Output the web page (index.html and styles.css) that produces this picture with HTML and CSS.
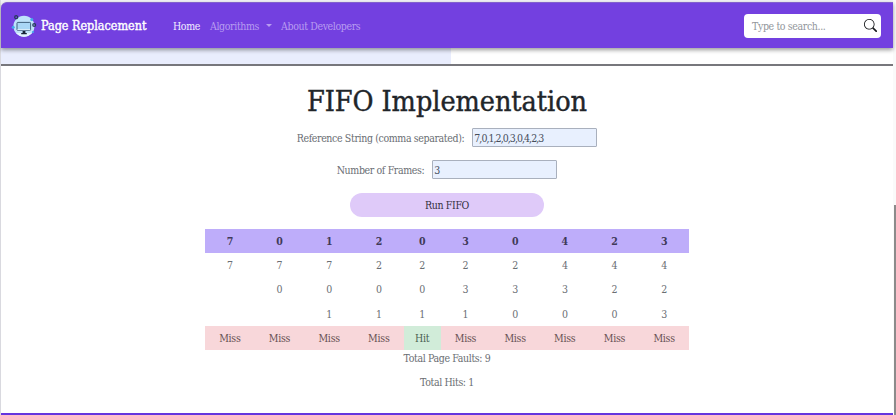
FILE: index.html
```
<!DOCTYPE html>
<html lang="en">
<head>
<meta charset="utf-8">
<title>Page Replacement</title>
<link rel="stylesheet" href="styles.css">
</head>
<body>
<div class="page">
  <nav class="navbar">
    <svg class="logo" width="26" height="26" viewBox="0 0 26 26">
      <circle cx="13" cy="13.3" r="10.6" fill="#bfe2fb"/>
      <path d="M5 20a10.6 10.6 0 0 0 16 0z" fill="#e2f4ff"/>
      <g fill="none" stroke="#263b5c" stroke-width="1.3">
        <circle cx="5.2" cy="4.2" r="1.5"/><circle cx="23.2" cy="12" r="1.4"/>
      </g>
      <g fill="#43a9ed"><circle cx="20.8" cy="6.6" r="1.5"/><circle cx="2.2" cy="14.2" r="1.5"/><circle cx="22" cy="19" r="1.1"/></g>
      <rect x="6" y="9.4" width="13.6" height="8" rx=".8" fill="#a9d6f6" stroke="#31516f" stroke-width=".9"/>
      <path d="M6.5 16.7h12.6" stroke="#e5f3fc"/>
      <path d="M11.6 18h2.8v2h1.4v1.2h-5.6V20h1.4z" fill="#172538"/>
    </svg>
    <span class="brand">Page Replacement</span>
    <a class="link active">Home</a>
    <a class="link algorithms">Algorithms</a><span class="caret"></span>
    <a class="link about">About Developers</a>
    <div class="search">
      <span class="hint">Type to search...</span>
      <svg width="13" height="13" viewBox="0 0 16 16" fill="#16181b"><path d="M11.742 10.344a6.5 6.5 0 1 0-1.397 1.398h-.001c.03.04.062.078.098.115l3.85 3.85a1 1 0 0 0 1.415-1.414l-3.85-3.85a1.007 1.007 0 0 0-.115-.1zM12 6.5a5.5 5.5 0 1 1-11 0 5.5 5.5 0 0 1 11 0z"/></svg>
    </div>
  </nav>
  <div class="strip"><div class="strip-fill"></div></div>
  <main>
    <h1>FIFO Implementation</h1>
    <div class="field first"><label class="ref-label">Reference String (comma separated):</label><div class="input ref-value">7,0,1,2,0,3,0,4,2,3</div></div>
    <div class="field second"><label class="frames-label">Number of Frames:</label><div class="input">3</div></div>
    <div class="run"><span>Run FIFO</span></div>
    <table>
      <colgroup><col><col><col><col><col class="hit-col"><col><col><col><col><col></colgroup>
      <thead><tr><th>7</th><th>0</th><th>1</th><th>2</th><th>0</th><th>3</th><th>0</th><th>4</th><th>2</th><th>3</th></tr></thead>
      <tbody>
        <tr><td>7</td><td>7</td><td>7</td><td>2</td><td>2</td><td>2</td><td>2</td><td>4</td><td>4</td><td>4</td></tr>
        <tr><td></td><td>0</td><td>0</td><td>0</td><td>0</td><td>3</td><td>3</td><td>3</td><td>2</td><td>2</td></tr>
        <tr><td></td><td></td><td>1</td><td>1</td><td>1</td><td>1</td><td>0</td><td>0</td><td>0</td><td>3</td></tr>
        <tr class="result"><td>Miss</td><td>Miss</td><td>Miss</td><td>Miss</td><td class="hit">Hit</td><td>Miss</td><td>Miss</td><td>Miss</td><td>Miss</td><td>Miss</td></tr>
      </tbody>
    </table>
    <p class="faults">Total Page Faults: 9</p>
    <p class="hits">Total Hits: 1</p>
  </main>
  <footer></footer>
</div>
<div class="scrollbar"><div class="thumb"></div></div>
</body>
</html>
```
FILE: styles.css
```
* { box-sizing: border-box; }
body {
  margin: 0;
  width: 896px;
  height: 415px;
  overflow: hidden;
  display: flex;
  background: #f2f1f7;
  color: #6a6e73;
  font-family: "Roboto Slab", "DejaVu Serif Condensed", "DejaVu Serif", serif;
  font-stretch: condensed;
  font-size: 10.5px;
  letter-spacing: -.37px;
  line-height: 24px;
  white-space: nowrap;
}
.page {
  width: 893px;
  height: 415px;
  padding-top: 2px;
  border-left: 1px solid #d9d9df;
  display: flex;
  flex-direction: column;
}
.navbar {
  flex: none;
  height: 46px;
  background: #7340e0;
  border-top: 1px solid #8260ce;
  border-radius: 6px 0 0 0;
  box-shadow: 0 2px 4px #0006;
  display: flex;
  align-items: center;
  padding: 0 12px 0 10px;
  z-index: 1;
}
.logo { margin-right: 4px; }
.brand { width: 132px; color: #fff; font-size: 12.5px; letter-spacing: -.02px; -webkit-text-stroke: .4px #fff; }
.link { color: #b89cf0; }
.active { color: #f4efff; width: 37px; }
.algorithms { width: 56px; }
.caret { border: 3px solid transparent; border-top-color: #b89cf0; border-bottom: 0; margin-right: 9px; }
.search {
  margin-left: auto;
  width: 137px;
  height: 24px;
  background: #fff;
  border-radius: 4px;
  display: flex;
  align-items: center;
  justify-content: space-between;
  padding: 0 4px 0 8px;
}
.hint { color: #92969b; }
.strip { flex: none; height: 18px; background: #fff; border-bottom: 2px solid #77777c; }
.strip-fill { width: 450px; height: 16px; background: #e9edfd; }
main {
  flex: 1;
  background: #fff;
  display: flex;
  flex-direction: column;
  align-items: center;
}
h1 {
  margin: 18px 0 0;
  height: 36px;
  line-height: 36px;
  font-size: 28.5px;
  font-weight: 400;
  letter-spacing: -.05px;
  color: #212529;
  -webkit-text-stroke: .4px #212529;
}
.field { display: flex; align-items: center; gap: 8px; height: 19px; }
.first { margin-top: 8px; }
.second { margin-top: 13px; }
.input {
  width: 125px;
  height: 19px;
  line-height: 18px;
  background: #e8f0fe;
  border: 1px solid #a9b0bd;
  border-radius: 1px;
  padding-left: 1px;
  color: #464d5a;
}
.ref-value { letter-spacing: -.95px; }
.run {
  margin-top: 14px;
  width: 194px;
  height: 24px;
  border-radius: 12px;
  background: #dfcaf9;
  color: #34303f;
  text-align: center;
}
table { margin-top: 12px; width: 484px; table-layout: fixed; border-collapse: collapse; }
.hit-col { width: 37px; }
th, td { height: 24.2px; padding: 0; text-align: center; line-height: 24px; letter-spacing: -.25px; }
th { background: #beadfa; color: #403958; font-weight: 700; }
.result { background: #f8d7da; color: #665052; }
.hit { background: #d1ecd9; color: #4a6051; }
p { margin: 0; height: 24px; line-height: 16px; }
footer { flex: none; height: 2px; background: #6535df; }
.scrollbar { width: 3px; height: 415px; background: #fafafa; }
.thumb { width: 2px; height: 210px; margin: 205px 0 0 1px; background: #8b8b8b; }
```
